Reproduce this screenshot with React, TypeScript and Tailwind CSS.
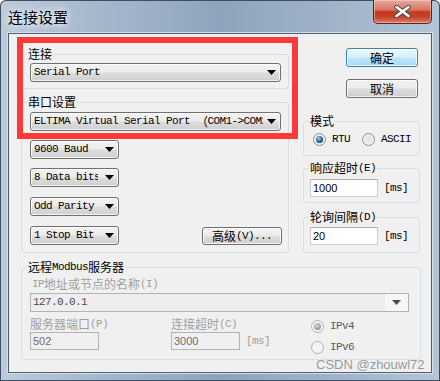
import React from "react";

const cjk = "font-['Noto_Sans_CJK_SC',sans-serif] text-[12px] leading-[14px]";
const mono = "font-['Liberation_Mono',monospace] text-[11px] tracking-[-0.6px]";
const num = "font-['Liberation_Sans',Arial,sans-serif] text-[11px]";
const btnBg =
  "bg-[linear-gradient(#f2f2f2_0%,#ebebeb_48%,#dddddd_52%,#cfcfcf_100%)] shadow-[inset_0_0_0_1px_rgba(255,255,255,0.75)]";

function Arrow({ color = "#000" }: { color?: string }) {
  return (
    <svg width="9" height="5" viewBox="0 0 9 5" className="shrink-0">
      <path d="M0 0H9L4.5 5Z" fill={color} />
    </svg>
  );
}

function Drop({
  text,
  className = "",
  gap = "mr-[4px]",
}: {
  text: React.ReactNode;
  className?: string;
  gap?: string;
}) {
  return (
    <div
      className={`flex h-[19px] min-w-0 items-center rounded-[3px] border border-[#707070] pl-[3px] pr-[4px] ${btnBg} ${className}`}
    >
      <span
        className={`${mono} ${gap} flex h-[17px] w-0 min-w-0 flex-1 items-center overflow-hidden whitespace-nowrap leading-[17px] text-black`}
      >
        {text}
      </span>
      <Arrow />
    </div>
  );
}

function Group({
  title,
  className = "",
  children,
}: {
  title: React.ReactNode;
  className?: string;
  children: React.ReactNode;
}) {
  return (
    <fieldset className={`min-w-0 rounded-[3px] border border-[#d5dfe5] ${className}`}>
      <legend className="ml-[5px] flex h-[14px] items-center whitespace-nowrap px-[1px] text-[12px] leading-[14px] text-black">
        {title}
      </legend>
      {children}
    </fieldset>
  );
}

function Radio({ checked, disabled }: { checked?: boolean; disabled?: boolean }) {
  return (
    <span
      className={`flex h-[13px] w-[13px] shrink-0 items-center justify-center rounded-full border ${
        disabled ? "border-[#b1b1b1] bg-[#f4f4f4]" : "border-[#8e8f8f] bg-[radial-gradient(circle,#e6e6e6_30%,#fafafa_100%)]"
      }`}
    >
      {checked && (
        <span
          className={`h-[7px] w-[7px] rounded-full ${
            disabled
              ? "bg-[radial-gradient(circle_at_40%_35%,#d8d8d8,#9a9a9a_65%,#8a8a8a)]"
              : "bg-[radial-gradient(circle_at_40%_35%,#9bd8f7,#1d5f96_55%,#0c355d)]"
          }`}
        />
      )}
    </span>
  );
}

function Input({ value, disabled, w }: { value: string; disabled?: boolean; w: string }) {
  return (
    <div
      className={`${w} h-[18px] shrink-0 border pl-[2px] leading-[16px] ${num} ${
        disabled
          ? "border-[#b4b4b4] bg-[#f0f0f0] text-[#6d6d6d]"
          : "border-[#c9ced3] border-t-[#abadb3] bg-white text-black"
      }`}
    >
      {value}
    </div>
  );
}

function Line({ children, className = "" }: { children: React.ReactNode; className?: string }) {
  return <div className={`flex h-[14px] items-center whitespace-nowrap ${className}`}>{children}</div>;
}

export default function App() {
  return (
    <div className="relative h-[381px] w-[440px] overflow-hidden rounded-t-[6px] bg-[linear-gradient(90deg,#bccbdc_0%,#a6b8cc_22%,#8fa4bc_50%,#9fb2c7_75%,#b4c5d6_100%)] shadow-[inset_0_0_0_1px_#3e4d60]">
      {/* title bar */}
      <div className="flex h-[33px] items-start pl-[8px] pt-[8px]">
        <span className="font-['Noto_Sans_CJK_SC',sans-serif] text-[15px] leading-[18px] text-black [text-shadow:0_0_6px_rgba(255,255,255,0.95),0_0_10px_rgba(255,255,255,0.7)]">
          连接设置
        </span>
      </div>
      <div className="absolute left-[373px] top-0 flex h-[24px] w-[59px] items-center justify-center rounded-b-[5px] border border-t-0 border-[#5a2222] bg-[linear-gradient(#e8ab9d_0%,#d77663_42%,#c3391e_52%,#c5442b_75%,#de8366_100%)] shadow-[inset_0_0_0_1px_rgba(255,220,210,0.45)]">
        <svg width="17" height="13" viewBox="0 0 17 13">
          <path d="M2.5 2L14.5 11M14.5 2L2.5 11" stroke="#4a4a4a" strokeWidth="4.6" strokeLinecap="round" />
          <path d="M2.5 2L14.5 11M14.5 2L2.5 11" stroke="#ffffff" strokeWidth="2.6" strokeLinecap="round" />
        </svg>
      </div>

      {/* client area */}
      <div className="mx-[8px] h-[340px] border border-[#4f5e71] bg-[#f0f0f0] shadow-[0_0_0_1px_#d5e0ea]">
        <div className="flex items-start">
          {/* left column */}
          <div className="ml-[12px] w-[268px] pt-[13px]">
            <Group title={<span className={cjk}>连接</span>}>
              <div className="pb-[6px] pl-[8px] pr-[7px] pt-[2px]">
                <Drop text="Serial Port" />
              </div>
            </Group>
            <Group title={<span className={cjk}>串口设置</span>} className="mt-[6px]">
              <div className="flex flex-col pb-[7px] pl-[8px] pr-[7px] pt-[3px]">
                <Drop
                  text={
                    <>
                      ELTIMA Virtual Serial Port&nbsp;
                      <span className={cjk}>（</span>
                      COM1-&gt;COM2)
                    </>
                  }
                />
                <Drop text="9600 Baud" gap="mr-[7px]" className="mt-[9px] w-[89px]" />
                <Drop text="8 Data bits" gap="mr-[7px]" className="mt-[9px] w-[89px]" />
                <Drop text="Odd Parity" gap="mr-[7px]" className="mt-[10px] w-[89px]" />
                <div className="mt-[10px] flex items-center">
                  <Drop text="1 Stop Bit" gap="mr-[7px]" className="w-[89px]" />
                  <div
                    className={`-mr-[1px] ml-auto flex h-[18px] w-[80px] items-center justify-center rounded-[3px] border border-[#707070] ${btnBg}`}
                  >
                    <span className={cjk}>高级</span>
                    <span className={`${mono} leading-[14px]`}>(V)...</span>
                  </div>
                </div>
              </div>
            </Group>
          </div>

          {/* right column */}
          <div className="ml-[14px] w-[117px] pt-[14px]">
            <div className="ml-[43px] flex h-[19px] w-[72px] items-center justify-center rounded-[3px] border border-[#3c7fb1] bg-[linear-gradient(#eaf6fd_0%,#d9f0fc_48%,#bee6fd_52%,#a7d9f5_100%)] shadow-[inset_0_0_0_1px_rgba(255,255,255,0.8)]">
              <span className={cjk}>确定</span>
            </div>
            <div
              className={`ml-[43px] mt-[12px] flex h-[19px] w-[72px] items-center justify-center rounded-[3px] border border-[#707070] ${btnBg}`}
            >
              <span className={cjk}>取消</span>
            </div>
            <Group title={<span className={cjk}>模式</span>} className="mt-[16px]">
              <div className="pb-[9px] pt-[5px]">
                <div className="flex h-[13px] items-center pl-[9px]">
                  <Radio checked />
                  <span className={`${mono} ml-[6px] leading-[13px]`}>RTU</span>
                  <span className="ml-[12px]">
                    <Radio />
                  </span>
                  <span className={`${mono} ml-[6px] leading-[13px]`}>ASCII</span>
                </div>
              </div>
            </Group>
            <Group
              title={
                <>
                  <span className={cjk}>响应超时</span>
                  <span className={mono}>(E)</span>
                </>
              }
              className="mt-[5px]"
            >
              <div className="flex items-center pb-[5px] pl-[6px] pt-[4px]">
                <Input value="1000" w="w-[68px]" />
                <span className={`${mono} ml-[6px] leading-[14px]`}>[ms]</span>
              </div>
            </Group>
            <Group
              title={
                <>
                  <span className={cjk}>轮询间隔</span>
                  <span className={mono}>(D)</span>
                </>
              }
              className="mt-[7px]"
            >
              <div className="flex items-center pb-[7px] pl-[6px] pt-[3px]">
                <Input value="20" w="w-[68px]" />
                <span className={`${mono} ml-[6px] leading-[14px]`}>[ms]</span>
              </div>
            </Group>
          </div>
        </div>

        {/* remote modbus server */}
        <Group
          title={
            <>
              <span className={cjk}>远程</span>
              <span className={mono}>Modbus</span>
              <span className={cjk}>服务器</span>
            </>
          }
          className="ml-[12px] mt-[7px] w-[400px]"
        >
          <div className="pb-[5px] pl-[8px] pt-[3px]">
            <Line className="pl-[2px] text-[#a0a0a0]">
              <span className={mono}>IP</span>
              <span className={cjk}>地址或节点的名称</span>
              <span className={mono}>(I)</span>
            </Line>
            <div className="mt-[2px] flex h-[19px] w-[379px] border border-[#b3b3b3] bg-[#eeeeee]">
              <div className={`flex-1 pl-[2px] leading-[17px] ${mono} text-[#4a4a4a]`}>127.0.0.1</div>
              <div className="flex w-[23px] items-center justify-center bg-[#f6f6f6]">
                <Arrow color="#505050" />
              </div>
            </div>
            <div className="mt-[5px] flex items-start">
              <div className="w-[141px]">
                <Line className="text-[#a0a0a0]">
                  <span className={cjk}>服务器端口</span>
                  <span className={mono}>(P)</span>
                </Line>
                <div className="mt-[1px]">
                  <Input value="502" disabled w="w-[69px]" />
                </div>
              </div>
              <div className="w-[140px]">
                <Line className="text-[#a0a0a0]">
                  <span className={cjk}>连接超时</span>
                  <span className={mono}>(C)</span>
                </Line>
                <div className="mt-[1px] flex items-center">
                  <Input value="3000" disabled w="w-[69px]" />
                  <span className={`${mono} ml-[6px] leading-[14px] text-[#a0a0a0]`}>[ms]</span>
                </div>
              </div>
              <div className="pt-[3px]">
                <div className="flex h-[13px] items-center">
                  <Radio checked disabled />
                  <span className={`${mono} ml-[6px] leading-[13px] text-[#5a5a5a]`}>IPv4</span>
                </div>
                <div className="mt-[8px] flex h-[13px] items-center">
                  <Radio disabled />
                  <span className={`${mono} ml-[6px] leading-[13px] text-[#5a5a5a]`}>IPv6</span>
                </div>
              </div>
            </div>
          </div>
        </Group>
      </div>

      {/* highlight rectangle drawn over the dialog */}
      <div className="pointer-events-none absolute left-[17px] top-[37px] h-[102px] w-[281px] border-[6px] border-[#fb3a3a]" />

      {/* watermark */}
      <div className="pointer-events-none absolute left-[316px] top-[357px] font-['Liberation_Sans',Arial,sans-serif] text-[13px] leading-[16px] text-[#8f8f8f] opacity-90 [text-shadow:0_0_2px_rgba(255,255,255,0.9)]">
        CSDN @zhouwl72
      </div>
    </div>
  );
}
